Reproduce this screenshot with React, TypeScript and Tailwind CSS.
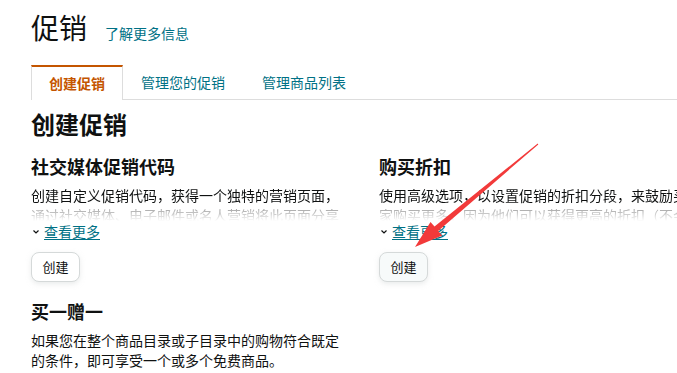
import React from "react";

const font = { fontFamily: '"Noto Sans CJK SC", "Noto Sans", sans-serif' };

function MoreLink() {
  return (
    <div className="flex items-center h-[20px] text-[14px] leading-[20px]">
      <svg width="8" height="8" viewBox="0 0 8 8" className="ml-[1px] mr-[4px] mt-[2px]">
        <polyline points="1.5,2.5 4,5 6.5,2.5" fill="none" stroke="#0f1111" strokeWidth="1.2" />
      </svg>
      <a className="text-[#007185] underline underline-offset-2">查看更多</a>
    </div>
  );
}

function Btn({ tint }: { tint?: boolean }) {
  return (
    <button
      className={
        "w-[49px] h-[30px] rounded-[8px] border border-[#d5d9d9] text-[13px] text-[#0f1111] shadow-[0_2px_5px_rgba(213,217,217,0.5)] " +
        (tint ? "bg-[#f7fafa]" : "bg-white")
      }
    >
      创建
    </button>
  );
}

function Card({ title, lines, fade, button, tint }: { title: string; lines: string; fade?: boolean; button?: boolean; tint?: boolean }) {
  return (
    <div className="flex flex-col">
      <h3 className="text-[18px] leading-[24px] font-bold text-[#0f1111]">{title}</h3>
      {fade ? (
        <>
          <p className="mt-[7px] h-[36px] overflow-hidden text-[14px] leading-[20px] bg-[linear-gradient(to_bottom,#0f1111_0%,#0f1111_55%,#9a9a9a_62%,#ffffff_100%)] bg-clip-text text-transparent">
            {lines}
          </p>
          <MoreLink />
        </>
      ) : (
        <p className="mt-[7px] text-[14px] leading-[20px] text-[#0f1111]">{lines}</p>
      )}
      {button && (
        <div className="mt-[11px]">
          <Btn tint={tint} />
        </div>
      )}
    </div>
  );
}

export default function App() {
  return (
    <div className="relative w-[677px] h-[373px] overflow-hidden bg-white text-[#0f1111]" style={font}>
      <div className="pl-[31px] pt-[9px]">
        <div className="flex items-baseline">
          <h1 className="text-[28px] leading-[36px] font-normal">促销</h1>
          <a className="ml-[18px] text-[14px] text-[#007185]">了解更多信息</a>
        </div>
        <div className="mt-[20px] flex border-b border-[#dddddd] h-[35px]">
          <div className="-mb-px h-[35px] flex items-center px-[17px] border-x border-[#dddddd] border-t-2 border-t-[#c45500] bg-white text-[14px] font-bold text-[#c45500]">
            创建促销
          </div>
          <div className="h-[34px] flex items-center px-[18px] text-[14px] text-[#007185]">
            管理您的促销
          </div>
          <div className="h-[34px] flex items-center px-[19px] text-[14px] text-[#007185]">
            管理商品列表
          </div>
        </div>
        <h2 className="mt-[8px] text-[24px] leading-[32px] font-bold">创建促销</h2>
        <div className="mt-[14px] grid grid-cols-[320px_320px] gap-x-[28px] gap-y-[17px]">
          <Card
            title="社交媒体促销代码"
            lines="创建自定义促销代码，获得一个独特的营销页面，通过社交媒体、电子邮件或名人营销将此页面分享给买家。"
            fade
            button
          />
          <Card
            title="购买折扣"
            lines="使用高级选项，以设置促销的折扣分段，来鼓励买家购买更多，因为他们可以获得更高的折扣（不会超过您设定的限制）。"
            fade
            button
            tint
          />
          <Card
            title="买一赠一"
            lines="如果您在整个商品目录或子目录中的购物符合既定的条件，即可享受一个或多个免费商品。"
          />
        </div>
      </div>
      <svg className="absolute left-0 top-0 pointer-events-none" width="677" height="373" viewBox="0 0 677 373">
        <polygon
          points="538.3,144.4 537.7,143.6 434.5,226.5 430.5,222 415,247 442.2,235.6 438.1,231.1"
          fill="#f23a3a"
        />
      </svg>
    </div>
  );
}
